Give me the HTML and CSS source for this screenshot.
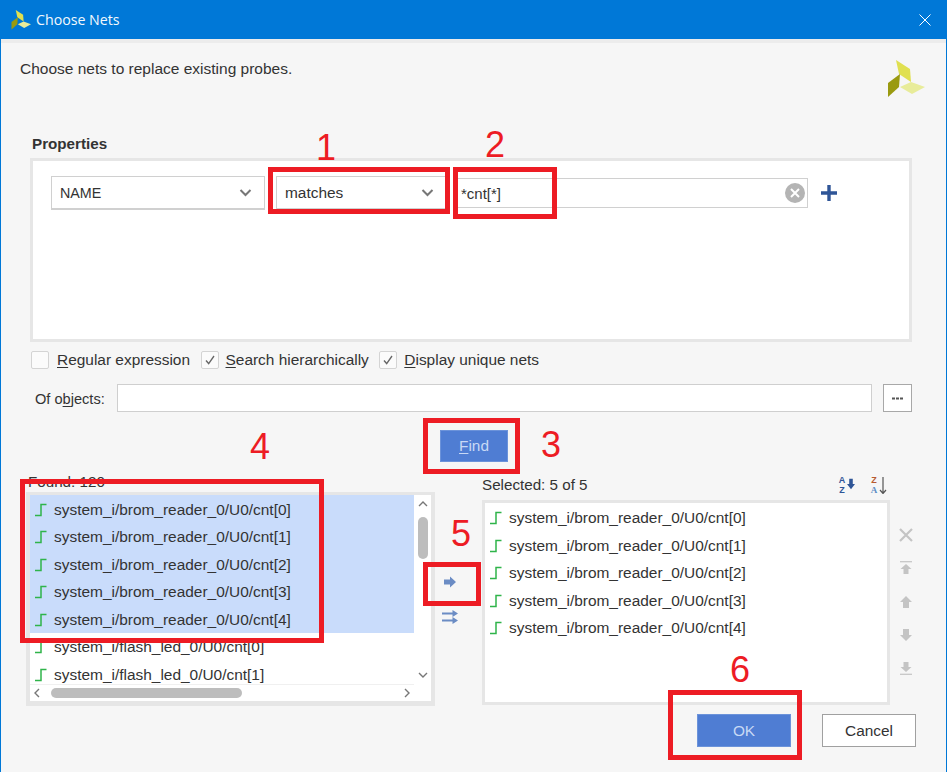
FILE: index.html
```html
<!DOCTYPE html>
<html lang="en">
<head>
<meta charset="utf-8">
<title>Choose Nets</title>
<link rel="stylesheet" href="styles.css">
</head>
<body>
<svg class="defs" width="0" height="0" aria-hidden="true">
  <symbol id="logo" viewBox="0 0 38 38">
    <polygon points="9,0 23,9 24,22 12,14" fill="#e0e050"/>
    <polygon points="13,14 12,27 1,37 1,23" fill="#9a9a10"/>
    <polygon points="13,27 24,22 38,27 25,34" fill="#e8ec9a"/>
  </symbol>
  <symbol id="sig" viewBox="0 0 14 14">
    <path d="M1 12.5H7V1.5H12.5" fill="none" stroke="#2fb44a" stroke-width="1.5"/>
  </symbol>
  <symbol id="up" viewBox="0 0 14 14">
    <path d="M7 1L13 7H10V13H4V7H1Z" fill="#c4c4c4"/>
  </symbol>
  <symbol id="down" viewBox="0 0 14 14">
    <path d="M7 13L13 7H10V1H4V7H1Z" fill="#c4c4c4"/>
  </symbol>
</svg>
<div class="dialog">
  <header class="titlebar">
    <svg class="title-logo"><use href="#logo"/></svg>
    <span class="title-text">Choose Nets</span>
    <svg class="title-close" viewBox="0 0 12 12"><path d="M0.5 0.5L11.5 11.5M11.5 0.5L0.5 11.5" stroke="#fff" stroke-width="1"/></svg>
  </header>
  <div class="strip"></div>
  <div class="intro">
    <span>Choose nets to replace existing probes.</span>
    <svg class="big-logo"><use href="#logo"/></svg>
  </div>
  <h2 class="heading">Properties</h2>
  <section class="panel">
    <div class="filter-row">
      <div class="select select-name"><span class="name-text">NAME</span><svg class="chev" viewBox="0 0 12 8"><path d="M1 1L6 6L11 1" fill="none" stroke="#777" stroke-width="2"/></svg></div>
      <div class="select select-op"><span>matches</span><svg class="chev" viewBox="0 0 12 8"><path d="M1 1L6 6L11 1" fill="none" stroke="#777" stroke-width="2"/></svg></div>
      <div class="search"><span class="search-text">*cnt[*]</span>
        <svg class="clear" viewBox="0 0 20 20"><circle cx="10" cy="10" r="10" fill="#b4b4b4"/><path d="M6 6L14 14M14 6L6 14" stroke="#fff" stroke-width="2"/></svg>
      </div>
      <svg class="plus" viewBox="0 0 18 18"><path d="M9 1V17M1 9H17" stroke="#2f5597" stroke-width="3.4"/></svg>
    </div>
  </section>
  <div class="options">
    <label class="opt"><span class="box"></span><span><u>R</u>egular expression</span></label>
    <label class="opt"><span class="box"><svg viewBox="0 0 18 18"><path d="M4.5 9.5L7.5 13L13.5 4.5" fill="none" stroke="#666" stroke-width="1.5"/></svg></span><span><u>S</u>earch hierarchically</span></label>
    <label class="opt"><span class="box"><svg viewBox="0 0 18 18"><path d="M4.5 9.5L7.5 13L13.5 4.5" fill="none" stroke="#666" stroke-width="1.5"/></svg></span><span><u>D</u>isplay unique nets</span></label>
  </div>
  <div class="objects">
    <span class="objects-label">Of o<u>b</u>jects:</span>
    <div class="objects-input"></div>
    <div class="more"><svg class="dots" viewBox="0 0 11 3"><path d="M0 0.500H3V2.500H0ZM4 0.500H7V2.500H4ZM8 0.500H11V2.500H8Z" fill="#555"/></svg></div>
  </div>
  <div class="find-row"><button class="btn primary find"><u>F</u>ind</button></div>
  <div class="lists">
    <div class="col-left">
      <div class="found">Found: 120</div>
      <div class="list list-left">
        <div class="list-body">
          <div class="rows">
            <div class="row sel"><svg class="sig"><use href="#sig"/></svg>system_i/brom_reader_0/U0/cnt[0]</div>
            <div class="row sel"><svg class="sig"><use href="#sig"/></svg>system_i/brom_reader_0/U0/cnt[1]</div>
            <div class="row sel"><svg class="sig"><use href="#sig"/></svg>system_i/brom_reader_0/U0/cnt[2]</div>
            <div class="row sel"><svg class="sig"><use href="#sig"/></svg>system_i/brom_reader_0/U0/cnt[3]</div>
            <div class="row sel"><svg class="sig"><use href="#sig"/></svg>system_i/brom_reader_0/U0/cnt[4]</div>
            <div class="row"><svg class="sig"><use href="#sig"/></svg>system_i/flash_led_0/U0/cnt[0]</div>
            <div class="row"><svg class="sig"><use href="#sig"/></svg>system_i/flash_led_0/U0/cnt[1]</div>
          </div>
          <div class="vscroll">
            <svg class="sb-arrow" viewBox="0 0 12 8"><path d="M2 6L6 2L10 6" fill="none" stroke="#777" stroke-width="1.4"/></svg>
            <div class="vthumb"></div>
            <svg class="sb-arrow" viewBox="0 0 12 8"><path d="M2 2L6 6L10 2" fill="none" stroke="#777" stroke-width="1.4"/></svg>
          </div>
        </div>
        <div class="hscroll">
          <svg class="sb-arrow-h" viewBox="0 0 8 12"><path d="M6 2L2 6L6 10" fill="none" stroke="#777" stroke-width="1.4"/></svg>
          <div class="htrack"><div class="hthumb"></div></div>
          <svg class="sb-arrow-h" viewBox="0 0 8 12"><path d="M2 2L6 6L2 10" fill="none" stroke="#777" stroke-width="1.4"/></svg>
        </div>
      </div>
    </div>
    <div class="col-mid">
      <svg class="move" viewBox="0 0 14 12"><path d="M1 3.500H7V0.500L13 6L7 11.500V8.500H1Z" fill="#6b8cc4"/></svg>
      <svg class="move" viewBox="0 0 16 14"><path d="M0 3.500H12M0 10.500H12" stroke="#6b8cc4" stroke-width="2" fill="none"/><path d="M10.500 0L16 3.500L10.500 7ZM10.500 7L16 10.500L10.500 14Z" fill="#6b8cc4"/></svg>
    </div>
    <div class="col-right">
      <div class="selected-head">
        <span>Selected: 5 of 5</span>
        <div class="sorts">
          <div class="sort">
            <div class="sort-letters az"><span>A</span><span>Z</span></div>
            <svg class="sort-arrow" viewBox="0 0 9 12"><path d="M2.500 0H6.500V6H9L4.500 12L0 6H2.500Z" fill="#2f5597"/></svg>
          </div>
          <div class="sort">
            <div class="sort-letters"><span class="za">Z</span><span class="zb">A</span></div>
            <svg class="sort-arrow tall" viewBox="0 0 8 17"><path d="M4 0V16M1 13L4 16.500L7 13" fill="none" stroke="#555" stroke-width="1.2"/></svg>
          </div>
        </div>
      </div>
      <div class="list list-right">
        <div class="row"><svg class="sig"><use href="#sig"/></svg>system_i/brom_reader_0/U0/cnt[0]</div>
        <div class="row"><svg class="sig"><use href="#sig"/></svg>system_i/brom_reader_0/U0/cnt[1]</div>
        <div class="row"><svg class="sig"><use href="#sig"/></svg>system_i/brom_reader_0/U0/cnt[2]</div>
        <div class="row"><svg class="sig"><use href="#sig"/></svg>system_i/brom_reader_0/U0/cnt[3]</div>
        <div class="row"><svg class="sig"><use href="#sig"/></svg>system_i/brom_reader_0/U0/cnt[4]</div>
      </div>
    </div>
    <div class="col-side">
      <svg class="side-x" viewBox="0 0 14 14"><path d="M1 1L13 13M13 1L1 13" stroke="#c4c4c4" stroke-width="2.200"/></svg>
      <svg class="side" viewBox="0 0 14 14"><path d="M1 0.700H13" stroke="#c4c4c4" stroke-width="1.200"/><path d="M7 3L12.500 8H9.500V13H4.500V8H1.500Z" fill="#c4c4c4"/></svg>
      <svg class="side"><use href="#up"/></svg>
      <svg class="side"><use href="#down"/></svg>
      <svg class="side" viewBox="0 0 14 14"><path d="M1 13.300H13" stroke="#c4c4c4" stroke-width="1.200"/><path d="M7 11L12.500 6H9.500V1H4.500V6H1.500Z" fill="#c4c4c4"/></svg>
    </div>
  </div>
  <footer class="footer">
    <button class="btn primary ok">OK</button>
    <button class="btn cancel">Cancel</button>
  </footer>

  <div class="mark m1"></div><span class="num n1">1</span>
  <div class="mark m2"></div><span class="num n2">2</span>
  <div class="mark m3"></div><span class="num n3">3</span>
  <div class="mark m4"></div><span class="num n4">4</span>
  <div class="mark m5"></div><span class="num n5">5</span>
  <div class="mark m6"></div><span class="num n6">6</span>
</div>
</body>
</html>
```
FILE: styles.css
```css
* { box-sizing: border-box; }
html, body { margin: 0; padding: 0; }
body { width: 947px; height: 772px; overflow: hidden; font-family: "Liberation Sans", Arial, sans-serif; font-size: 15.45px; color: #333; background: #f6f6f6; }
.defs { position: absolute; }
u { text-underline-offset: 2px; }

.dialog { position: relative; width: 947px; height: 772px; border-left: 1px solid #0078d7; border-right: 1px solid #0078d7; background: #f6f6f6; }

.titlebar { height: 39px; background: #0078d7; display: flex; align-items: center; margin: 0 -1px; padding: 0 15px 0 11px; color: #fff; }
.title-logo { width: 20px; height: 20px; margin-right: 5px; }
.title-text { font-family: "Open Sans", sans-serif; font-size: 14.2px; flex: 1; color: #f2f8fd; }
.title-close { width: 12px; height: 12px; margin-right: 1px; }
.strip { height: 4px; background: #ececec; }

.intro { height: 55px; padding: 17px 21px 0 19px; display: flex; justify-content: space-between; align-items: flex-start; line-height: 18px; font-size: 15.5px; }
.big-logo { width: 38px; height: 38px; margin-top: 0; }

.heading { margin: 38px 0 6px 31px; font-size: 15.2px; line-height: 16px; font-weight: bold; height: 16px; }

.panel { margin-left: 29px; width: 882px; height: 184px; border: 3px solid #e6e6e6; background: #fff; padding: 15px 18px; }
.filter-row { display: flex; align-items: center; height: 34px; }
.select { height: 34px; background: #fff; border: 1px solid #d0d0d0; border-bottom-width: 2px; display: flex; align-items: center; justify-content: space-between; padding: 1px 12px 0 8px; }
.name-text { font-size: 14.3px; }
.select-name { width: 214px; margin-right: 11px; }
.select-op { width: 171px; margin-right: 10px; }
.chev { width: 13px; height: 8px; }
.search { width: 351px; height: 30px; border: 1px solid #d0d0d0; display: flex; align-items: center; justify-content: space-between; padding: 0 2px 0 3px; }
.search-text { font-size: 15px; }
.clear { width: 20px; height: 20px; }
.plus { width: 18px; height: 18px; margin-left: 12px; }

.options { height: 18px; margin: 9px 0 0 30px; display: flex; }
.opt { display: flex; align-items: center; gap: 7px; margin-right: 10.5px; white-space: nowrap; }
.opt:first-child { gap: 8px; }
.box { width: 18px; height: 18px; border: 1px solid #d4d4d4; border-radius: 2px; background: #fbfbfb; display: block; }
.box svg { display: block; width: 16px; height: 16px; }

.objects { margin: 15px 0 0 34px; display: flex; align-items: center; height: 28px; }
.objects-label { width: 82px; font-size: 14.6px; padding-top: 1px; }
.objects-input { width: 755px; height: 28px; background: #fff; border: 1px solid #cfcfcf; }
.more { width: 29px; height: 28px; margin-left: 11px; background: #fff; border: 1px solid #a8a8a8; display: flex; align-items: center; justify-content: center; }
.dots { width: 11px; height: 3px; }

.find-row { margin: 18px 0 0 439px; height: 32px; }
.btn { font-family: "Liberation Sans", Arial, sans-serif; font-size: 15.4px; padding: 0; }
.primary { background: #4f7dd3; border: 1px solid #6c93da; color: #c8d9f5; }
.find { width: 68px; height: 32px; }

.lists { margin: 12px 0 0 25px; display: grid; grid-template-columns: 408px 48px 408px 57px; height: 232px; }
.col-left, .col-right { display: flex; flex-direction: column; }
.found { height: 18px; line-height: 15px; padding: 0 0 0 2px; font-size: 15.2px; }
.list { background: #fff; border: 3px solid #e6e6e6; }
.list-left { height: 214px; width: 409px; border-width: 3px 4px 5px; }
.list-body { display: flex; height: 189px; }
.rows { width: 384px; height: 189px; overflow: hidden; }
.row { height: 27.5px; display: flex; align-items: center; padding: 2px 0 0 4px; white-space: nowrap; }
.row.sel { background: #c9dcfb; }
.sig { width: 14px; height: 14px; margin-right: 6px; flex: none; }
.vscroll { width: 17px; display: flex; flex-direction: column; align-items: center; }
.sb-arrow { width: 12px; height: 8px; margin: 5px 0; flex: none; }
.vthumb { width: 10px; height: 42px; background: #bdbdbd; border-radius: 5px; margin-top: 4px; flex: none; margin-bottom: auto; }
.hscroll { height: 17px; width: 384px; display: flex; align-items: center; padding: 0 3px; background: #fff; border-top: 1px solid #f0f0f0; }
.sb-arrow-h { width: 8px; height: 12px; flex: none; }
.htrack { flex: 1; padding-left: 10px; }
.hthumb { width: 191px; height: 10px; border-radius: 5px; background: #bdbdbd; }

.col-mid { display: flex; flex-direction: column; align-items: center; padding: 102px 16px 0 0; }
.move { width: 14px; height: 12px; margin-bottom: 22px; }
.move + .move { width: 16px; height: 14px; }

.selected-head { height: 26px; display: flex; justify-content: space-between; padding-top: 3px; line-height: 16px; font-size: 15.2px; }
.sorts { display: flex; gap: 15px; margin-right: 3px; margin-top: -2px; }
.sort { display: flex; align-items: center; gap: 1px; width: 17px; height: 20px; }
.sort-letters { display: flex; flex-direction: column; width: 8px; font-weight: bold; font-size: 9px; line-height: 10px; text-align: center; }
.sort-letters span { height: 10px; overflow: hidden; }
.sort-arrow { width: 8px; height: 12px; flex: none; margin-bottom: 3px; }
.sort-arrow.tall { height: 17px; margin-bottom: 0; }
.az { color: #2f5597; }
.za { color: #b85a30; }
.zb { color: #5b8cc4; font-family: "Liberation Serif", serif; }
.list-right { height: 205px; }
.list-right .row { padding: 1px 0 0 4px; }
.list-right .row:first-child { margin-top: 1px; }

.col-side { display: flex; flex-direction: column; align-items: center; width: 32px; padding: 54px 0 0 0; gap: 19.3px; }
.side-x { width: 14px; height: 14px; }
.side { width: 14px; height: 14px; }

.footer { position: relative; display: flex; margin: 8px 0 0 696px; gap: 31px; }
.ok, .cancel { width: 94px; height: 33px; }
.cancel { background: #fff; border: 1px solid #a0a0a0; color: #333; }

.mark { position: absolute; border: 5px solid #ed1c24; }
.m1 { left: 267px; top: 167px; width: 182px; height: 47px; }
.m2 { left: 452px; top: 167px; width: 104px; height: 52px; }
.m3 { left: 422px; top: 418px; width: 97px; height: 56px; }
.m4 { left: 19px; top: 479px; width: 304px; height: 164px; }
.m5 { left: 422px; top: 562px; width: 58px; height: 44px; }
.m6 { left: 667px; top: 690px; width: 134px; height: 70px; }
.num { position: absolute; color: #ed1c24; font-size: 36px; line-height: 36px; }
.n1 { left: 315px; top: 130px; }
.n2 { left: 484px; top: 127px; }
.n3 { left: 540px; top: 427px; }
.n4 { left: 249px; top: 429px; }
.n5 { left: 450px; top: 516px; }
.n6 { left: 729px; top: 652px; }
```
